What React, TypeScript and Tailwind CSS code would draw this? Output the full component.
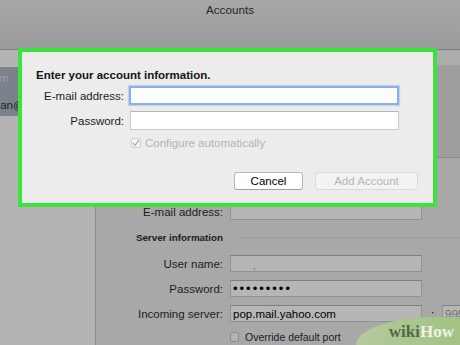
import React from "react";

function FormRow({ label, children }: { label: string; children: React.ReactNode }) {
  return (
    <div className="flex items-center h-[17px] gap-[7px]">
      <span className="w-[127px] shrink-0 text-right whitespace-nowrap">{label}</span>
      {children}
    </div>
  );
}

function Field({ children, className = "" }: { children?: React.ReactNode; className?: string }) {
  return (
    <div
      className={
        "h-[17px] shrink-0 bg-[#b6b6b6] border border-[#929292] border-t-[#7f7f7f] flex items-center pl-[2px] whitespace-nowrap overflow-hidden " +
        className
      }
    >
      {children}
    </div>
  );
}

export default function App() {
  return (
    <div className="relative w-[460px] h-[345px] overflow-hidden bg-[#a8a8a8] font-['Liberation_Sans',Arial,sans-serif] text-[11.5px] leading-[14px] text-[#1c1c1c]">
      {/* Window title bar */}
      <div className="h-[50px] bg-linear-to-b from-[#a8a8a8] to-[#9b9b9b] border-b border-[#7c7c7c] flex justify-center pt-[3px]">
        <span className="text-[11.7px] text-[#262626]">Accounts</span>
      </div>

      <div className="flex h-[295px]">
        {/* Accounts list */}
        <div className="w-[96px] shrink-0 bg-[#b4b4b4] border-r border-[#8c8c8c] pt-[17px] overflow-hidden">
          <div className="h-[49px] bg-[#7b828c] pt-[4px] whitespace-nowrap">
            <div className="ml-[-49px] text-[#9aa0a8]">Yahoo.com</div>
            <div className="ml-[-19px] mt-[13px] text-[#1e2228]">jordan@yahoo.com</div>
          </div>
        </div>

        {/* Account settings */}
        <div className="flex-1 min-w-0 flex flex-col overflow-hidden">
          <div className="h-[15px] bg-[#adadad]" />
          <div className="h-[93px] bg-[#9e9e9e] border-b border-[#8f8f8f]" />
          <div className="flex flex-col pt-[45px]">
            <FormRow label="E-mail address:">
              <Field className="w-[192px]" />
            </FormRow>
            <div className="flex items-center h-[19px] mt-[8px]">
              <span className="w-[127px] shrink-0 text-right font-bold text-[9.8px] whitespace-nowrap">Server information</span>
              <div className="flex-1 ml-[17px] h-px bg-[#9c9c9c]" />
            </div>
            <div className="mt-[8px]">
              <FormRow label="User name:">
                <Field className="w-[192px]">
                  <span className="ml-[20px] mt-[4px] text-[#555] text-[9px]">,</span>
                </Field>
              </FormRow>
            </div>
            <div className="mt-[8px]">
              <FormRow label="Password:">
                <Field className="w-[192px] text-[13px] tracking-[2px] text-black">•••••••••</Field>
              </FormRow>
            </div>
            <div className="mt-[8px]">
              <FormRow label="Incoming server:">
                <Field className="w-[192px] text-black">pop.mail.yahoo.com</Field>
                <span className="ml-[2px] w-[9px] shrink-0 text-black">:</span>
                <Field className="w-[30px] ml-[-5px] text-[#6f6f6f]">995</Field>
              </FormRow>
            </div>
            <div className="mt-[6px] flex items-center h-[17px] pl-[134px] gap-[6px]">
              <div className="w-[9px] h-[10px] rounded-[2px] border border-[#8a8a8a] bg-[#b3b3b3]" />
              <span className="text-[10.5px] whitespace-nowrap">Override default port</span>
            </div>
          </div>
        </div>
      </div>

      {/* Add account sheet (highlighted) */}
      <div className="absolute left-[18px] top-[48px] w-[419px] h-[159px] border-[4px] border-[#3de33d] bg-[#ececec] flex flex-col pt-[16px] pl-[14px]">
        <div className="font-bold text-[11.5px] text-[#141414]">Enter your account information.</div>
        <div className="mt-[4px] flex items-center h-[19px] gap-[5px]">
          <span className="w-[88px] text-right">E-mail address:</span>
          <div className="w-[270px] h-[19px] bg-[#fbfdff] border-[2px] border-[#8db0e2] shadow-[0_0_1px_1px_#bcd3f2]" />
        </div>
        <div className="mt-[6px] flex items-center h-[19px] gap-[5px]">
          <span className="w-[88px] text-right">Password:</span>
          <div className="ml-[1px] w-[269px] h-[19px] bg-white border border-[#c9c9c9] border-t-[#b4b4b4]" />
        </div>
        <div className="mt-[4px] flex items-center h-[18px] pl-[95px] gap-[4px] text-[#b3b3b3]">
          <div className="w-[10px] h-[10px] rounded-[2px] border border-[#cfcfcf] bg-[#f4f4f4] flex items-center justify-center">
            <svg width="8" height="8" viewBox="0 0 8 8">
              <path d="M1 4.2 L3 6.6 L7 0.8" fill="none" stroke="#a9a9a9" strokeWidth="1.2" />
            </svg>
          </div>
          <span>Configure automatically</span>
        </div>
        <div className="mt-[20px] flex justify-end gap-[12px] pr-[15px]">
          <div className="w-[69px] h-[18px] rounded-[3px] bg-white border border-[#b9b9b9] border-b-[#9f9f9f] flex items-center justify-center text-black">
            Cancel
          </div>
          <div className="w-[103px] h-[18px] rounded-[3px] bg-[#f3f3f3] border border-[#dadada] flex items-center justify-center text-[#b6b6b6]">
            Add Account
          </div>
        </div>
      </div>

      {/* wikiHow watermark */}
      <div className="absolute right-0 bottom-0 w-[104px] h-[28px] rounded-tl-[80px_28px] bg-linear-to-r from-[#b4c99c] to-[#a3c283] flex items-center justify-end pr-[6px] pt-[2px]">
        <span className="font-['Liberation_Serif',serif] font-bold text-[17px] leading-[18px]">
          <span className="text-[#56684a]">wiki</span>
          <span className="text-[#eef3e6]">How</span>
        </span>
      </div>
    </div>
  );
}
